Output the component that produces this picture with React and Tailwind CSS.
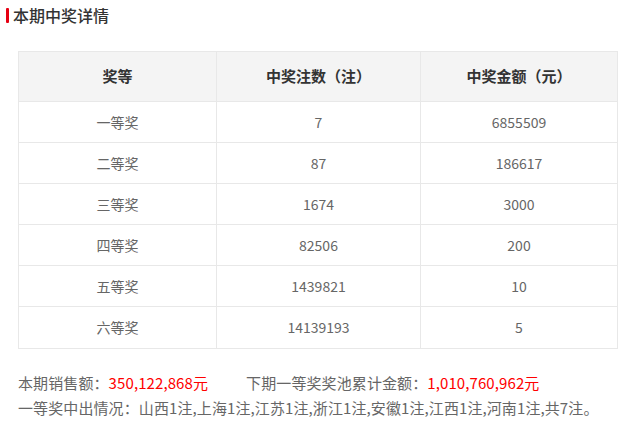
const rows = [
  ["一等奖", "7", "6855509"],
  ["二等奖", "87", "186617"],
  ["三等奖", "1674", "3000"],
  ["四等奖", "82506", "200"],
  ["五等奖", "1439821", "10"],
  ["六等奖", "14139193", "5"],
];

export default function App() {
  return (
    <div className="w-[633px] h-[440px] bg-white font-['Noto_Sans_CJK_SC',sans-serif]">
      <div className="flex items-center pt-[6px] pl-[6px]">
        <span className="w-[3px] h-[15px] bg-[#e60012] rounded-[1px]" />
        <h2 className="ml-[4px] text-[16px] leading-[18px] font-medium text-[#333]">本期中奖详情</h2>
      </div>

      <div className="ml-[18px] mt-[27px] w-[600px] border border-[#e8e8e8]">
        <div className="grid grid-cols-[198px_204px_196px] h-[50px] bg-[#f4f4f4] border-b border-[#e8e8e8] text-[15px] font-bold text-[#333]">
          <div className="flex items-center justify-center border-r border-[#e8e8e8]">奖等</div>
          <div className="flex items-center justify-center border-r border-[#e8e8e8]">中奖注数（注）</div>
          <div className="flex items-center justify-center">中奖金额（元）</div>
        </div>
        {rows.map((r, i) => (
          <div
            key={r[0]}
            className={`grid grid-cols-[198px_204px_196px] h-[41px] text-[14px] text-[#666] ${
              i < rows.length - 1 ? "border-b border-[#e8e8e8]" : "h-[40px]"
            }`}
          >
            <div className="flex items-center justify-center border-r border-[#e8e8e8]">{r[0]}</div>
            <div className="flex items-center justify-center border-r border-[#e8e8e8]">{r[1]}</div>
            <div className="flex items-center justify-center">{r[2]}</div>
          </div>
        ))}
      </div>

      <div className="ml-[18px] mt-[21px] text-[15px] leading-[25px] tracking-[0.1px] text-[#666]">
        <p>
          本期销售额：<span className="text-[#f00]">350,122,868元</span>
          <span className="ml-[38px]">下期一等奖奖池累计金额：</span>
          <span className="text-[#f00]">1,010,760,962元</span>
        </p>
        <p>一等奖中出情况：山西1注,上海1注,江苏1注,浙江1注,安徽1注,江西1注,河南1注,共7注。</p>
      </div>
    </div>
  );
}
